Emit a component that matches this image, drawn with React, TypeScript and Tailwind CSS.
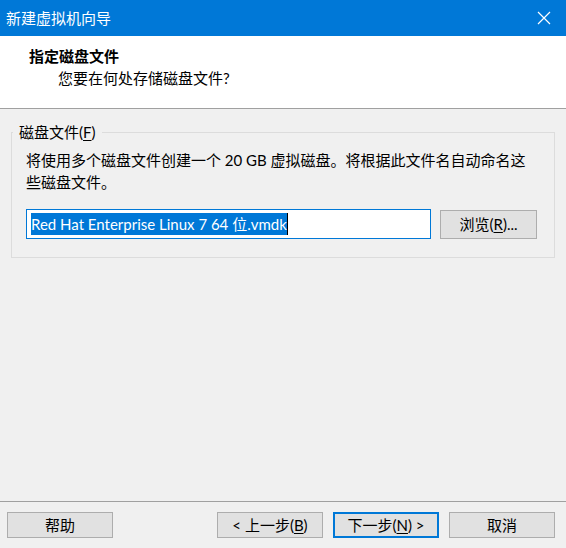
import React from 'react';

const font = "font-['Lato','Noto_Sans_CJK_SC',sans-serif]";

const Btn = ({
  children,
  primary = false,
  className = 'w-[106px] h-[26px]',
}: {
  children: React.ReactNode;
  primary?: boolean;
  className?: string;
}) => (
  <button
    className={`shrink-0 bg-[#e1e1e1] text-[15px] leading-none text-black flex items-center justify-center ${
      primary ? 'border-2 border-[#0078d7]' : 'border border-[#adadad]'
    } ${className}`}
  >
    {children}
  </button>
);

export default function App() {
  return (
    <div className={`w-[566px] h-[548px] flex flex-col bg-[#f0f0f0] overflow-hidden ${font}`}>
      {/* title bar */}
      <div className="h-[36px] bg-[#0078d7] flex items-center justify-between pl-[6px] pr-[14px] text-white">
        <span className="text-[15px]">新建虚拟机向导</span>
        <svg width="14" height="14" viewBox="0 0 14 14" className="mr-[1px]">
          <path d="M1 1 L13 13 M13 1 L1 13" stroke="white" strokeWidth="1.2" />
        </svg>
      </div>

      {/* header */}
      <div className="h-[73px] bg-white border-b border-[#a0a0a0] pt-[9px]">
        <div className="pl-[29px] text-[15px] font-bold leading-[22px] text-black">指定磁盘文件</div>
        <div className="pl-[58px] text-[15px] leading-[22px] text-black">您要在何处存储磁盘文件?</div>
      </div>

      {/* body */}
      <div className="flex-1 px-[11px] pt-[14px]">
        <fieldset className="border border-[#dcdcdc] h-[135px] px-[14px]">
          <legend className="px-[6px] -ml-[13px] text-[15px] leading-[18px] text-black">
            磁盘文件(<span className="underline underline-offset-2">F</span>)
          </legend>
          <p className="text-[15px] leading-[22px] text-black mt-[8px] pr-[10px]">
            将使用多个磁盘文件创建一个 20 GB 虚拟磁盘。将根据此文件名自动命名这些磁盘文件。
          </p>
          <div className="flex items-start gap-[9px] mt-[16px]">
            <div className="w-[405px] h-[30px] shrink-0 border border-[#0078d7] bg-white flex items-center pl-[4px]">
              <span className="bg-[#0078d7] text-white text-[15px] leading-[22px] whitespace-nowrap">
                Red Hat Enterprise Linux 7 64 位.vmdk
              </span>
              <span className="w-[1px] h-[22px] bg-black" />
            </div>
            <Btn className="w-[97px] h-[29px] mt-[1px]">
              浏览(<span className="underline underline-offset-2">R</span>)...
            </Btn>
          </div>
        </fieldset>
      </div>

      {/* footer */}
      <div className="h-[47px] border-t border-[#a0a0a0] flex items-start pt-[10px] px-[7px]">
        <Btn>帮助</Btn>
        <div className="flex-1" />
        <Btn className="w-[106px] h-[26px] mr-[10px]">
          &lt; 上一步(<span className="underline underline-offset-2">B</span>)
        </Btn>
        <Btn primary className="w-[106px] h-[26px] mr-[10px]">
          下一步(<span className="underline underline-offset-2">N</span>) &gt;
        </Btn>
        <Btn className="w-[106px] h-[26px] mr-[4px]">取消</Btn>
      </div>
    </div>
  );
}
